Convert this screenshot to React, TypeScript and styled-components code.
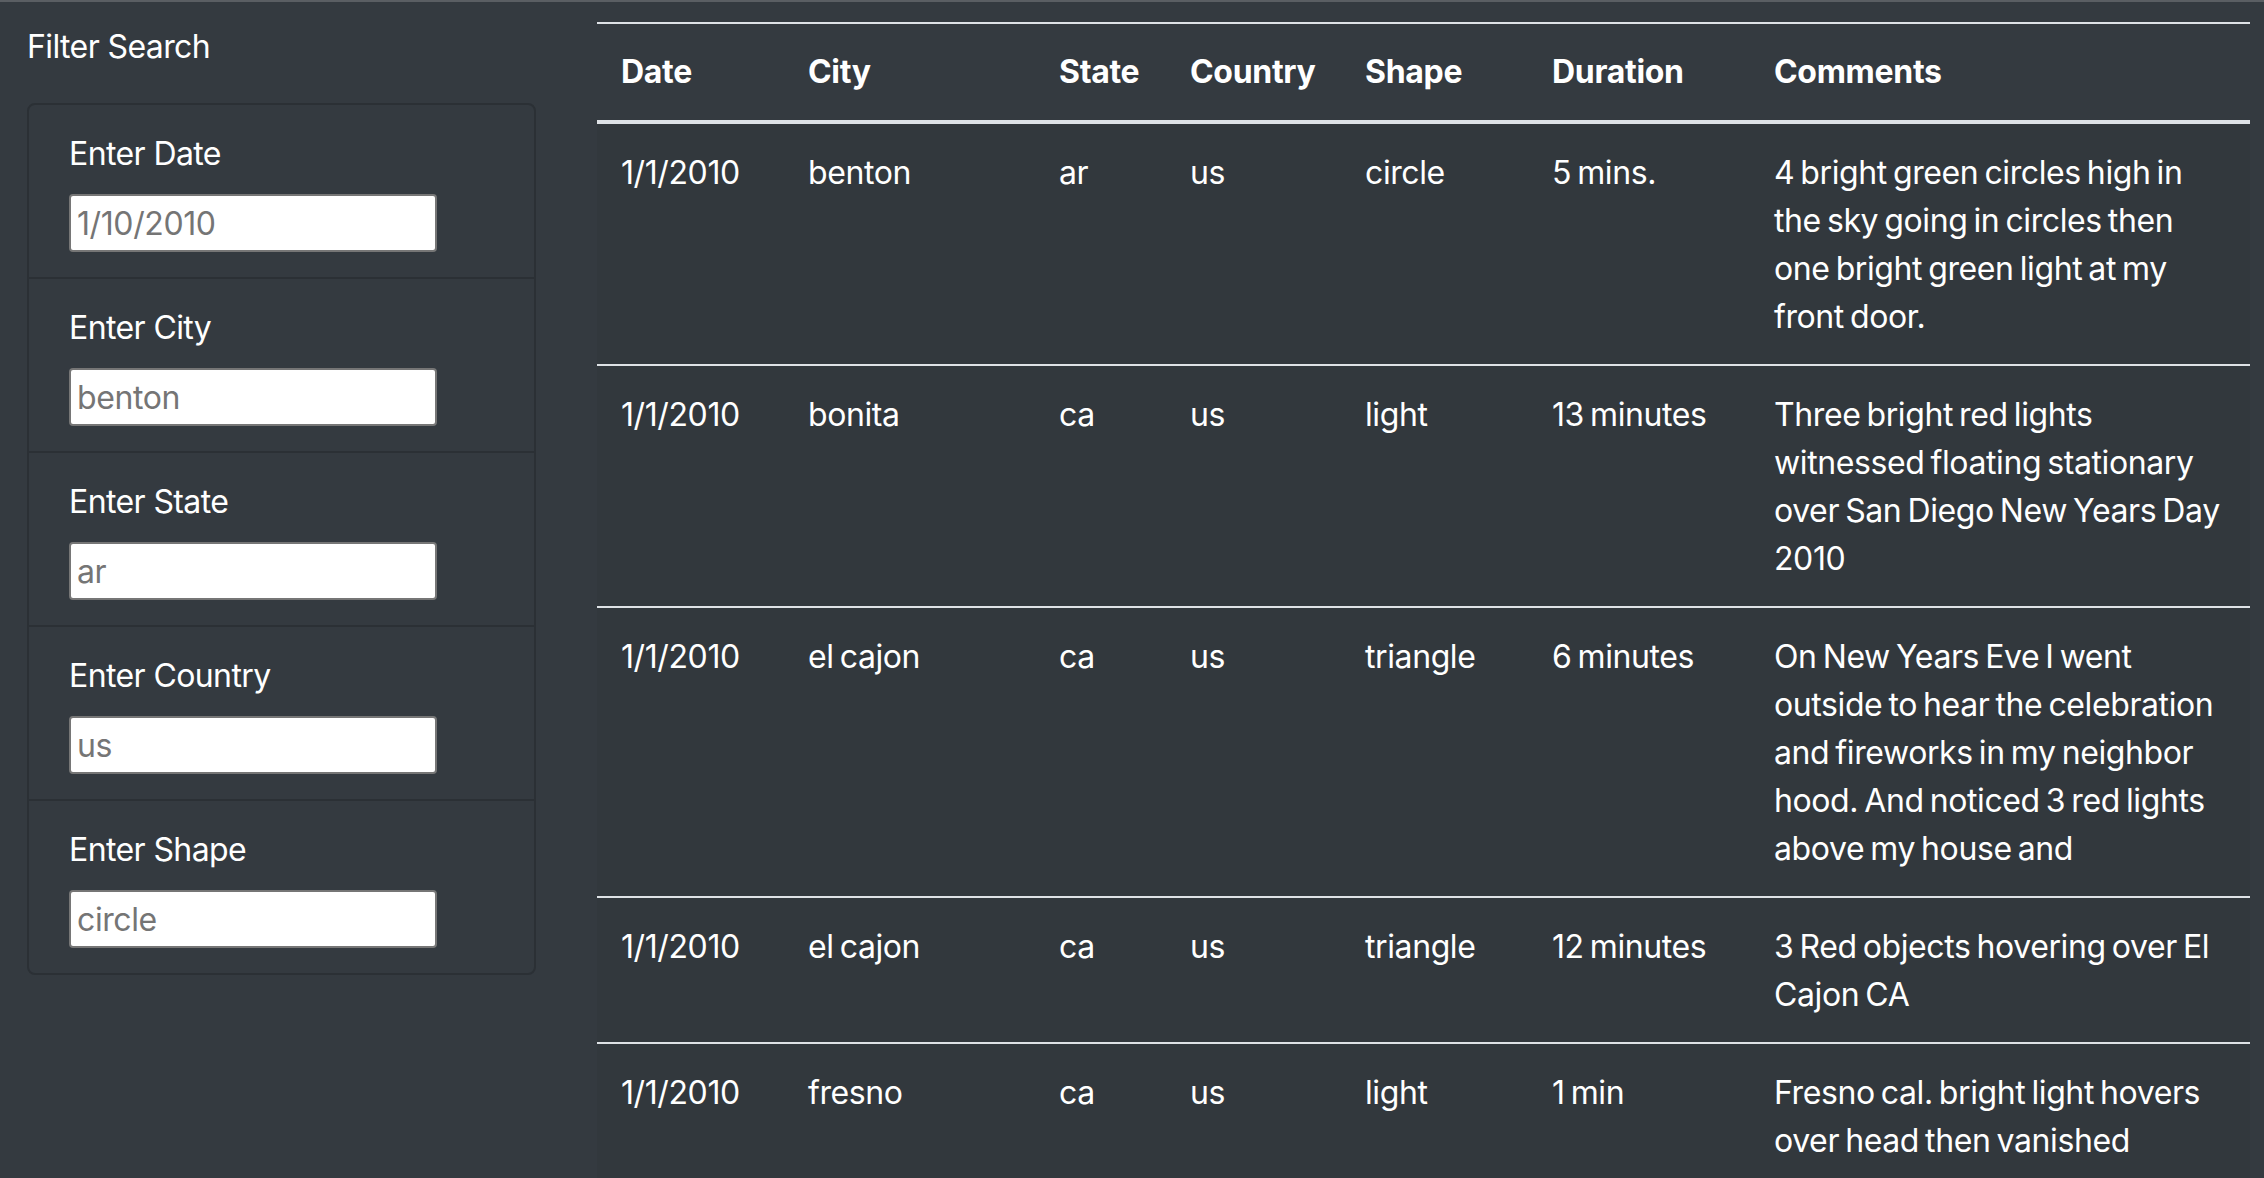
import React from "react";
import styled, { createGlobalStyle } from "styled-components";

const GlobalStyle = createGlobalStyle`
  html, body {
    margin: 0;
    padding: 0;
    background: #343a40;
  }
  body {
    font-family: Inter, "Noto Sans", "Liberation Sans", sans-serif;
    color: #ffffff;
    overflow: hidden;
  }
  * { box-sizing: border-box; }
`;

const Page = styled.div`
  min-height: 1178px;
  background: #343a40;
  border-top: 2px solid #5a5e63;
`;

const Layout = styled.div`
  display: flex;
  align-items: flex-start;
  padding: 0 14px 0 27px;
  gap: 61px;
`;

const Sidebar = styled.aside`
  width: 509px;
  flex: none;
  padding-top: 21px;
`;

const SideTitle = styled.div`
  font-size: 32px;
  line-height: 48px;
  margin-bottom: 32px;
  letter-spacing: -0.6px;
`;

const Card = styled.div`
  border: 2px solid #2b3035;
  border-radius: 8px;
  overflow: hidden;
`;

const Item = styled.div`
  padding: 25px 40px;
  border-bottom: 2px solid #2b3035;
  &:last-child {
    border-bottom: none;
  }
`;

const Label = styled.label`
  display: block;
  font-size: 32px;
  line-height: 48px;
  margin-bottom: 16px;
  letter-spacing: -0.6px;
`;

const Input = styled.input`
  display: block;
  width: 368px;
  height: 58px;
  border: 2px solid #767676;
  border-radius: 4px;
  background: #ffffff;
  padding: 0 6px;
  font-family: inherit;
  font-size: 32px;
  letter-spacing: -0.4px;
  color: #212529;
  outline: none;
  &::placeholder {
    color: #757575;
  }
`;

const Main = styled.main`
  flex: 1;
  padding-top: 20px;
`;

const Table = styled.table`
  width: 100%;
  border-collapse: separate;
  border-spacing: 0;
  table-layout: fixed;
  font-size: 32px;
  line-height: 48px;
`;

const Th = styled.th`
  text-align: left;
  font-weight: 700;
  padding: 24px;
  letter-spacing: -0.3px;
  border-top: 2px solid #dee2e6;
  border-bottom: 4px solid #dee2e6;
  vertical-align: bottom;
  white-space: nowrap;
`;

const Td = styled.td`
  padding: 25px 24px 23px;
  vertical-align: top;
  letter-spacing: -0.4px;
  word-spacing: -2.5px;
  border-bottom: 2px solid #dee2e6;
  background: #32383d;
`;

const columns: { key: string; label: string; width: number }[] = [
  { key: "date", label: "Date", width: 187 },
  { key: "city", label: "City", width: 251 },
  { key: "state", label: "State", width: 131 },
  { key: "country", label: "Country", width: 175 },
  { key: "shape", label: "Shape", width: 187 },
  { key: "duration", label: "Duration", width: 222 },
  { key: "comments", label: "Comments", width: 500 },
];

type Sighting = {
  date: string;
  city: string;
  state: string;
  country: string;
  shape: string;
  duration: string;
  comments: string;
};

const rows: Sighting[] = [
  {
    date: "1/1/2010",
    city: "benton",
    state: "ar",
    country: "us",
    shape: "circle",
    duration: "5 mins.",
    comments:
      "4 bright green circles high in the sky going in circles then one bright green light at my front door.",
  },
  {
    date: "1/1/2010",
    city: "bonita",
    state: "ca",
    country: "us",
    shape: "light",
    duration: "13 minutes",
    comments:
      "Three bright red lights witnessed floating stationary over San Diego New Years Day 2010",
  },
  {
    date: "1/1/2010",
    city: "el cajon",
    state: "ca",
    country: "us",
    shape: "triangle",
    duration: "6 minutes",
    comments:
      "On New Years Eve I went outside to hear the celebration and fireworks in my neighbor hood. And noticed 3 red lights above my house and",
  },
  {
    date: "1/1/2010",
    city: "el cajon",
    state: "ca",
    country: "us",
    shape: "triangle",
    duration: "12 minutes",
    comments: "3 Red objects hovering over El Cajon CA",
  },
  {
    date: "1/1/2010",
    city: "fresno",
    state: "ca",
    country: "us",
    shape: "light",
    duration: "1 min",
    comments: "Fresno cal. bright light hovers over head then vanished",
  },
];

const filters = [
  { id: "datetime", label: "Enter Date", placeholder: "1/10/2010" },
  { id: "city", label: "Enter City", placeholder: "benton" },
  { id: "state", label: "Enter State", placeholder: "ar" },
  { id: "country", label: "Enter Country", placeholder: "us" },
  { id: "shape", label: "Enter Shape", placeholder: "circle" },
];

export default function App() {
  return (
    <Page>
      <GlobalStyle />
      <Layout>
        <Sidebar>
          <SideTitle>Filter Search</SideTitle>
          <Card>
            {filters.map((f) => (
              <Item key={f.id}>
                <Label htmlFor={f.id}>{f.label}</Label>
                <Input id={f.id} type="text" placeholder={f.placeholder} />
              </Item>
            ))}
          </Card>
        </Sidebar>
        <Main>
          <Table>
            <colgroup>
              {columns.map((c) => (
                <col key={c.key} style={{ width: c.width }} />
              ))}
            </colgroup>
            <thead>
              <tr>
                {columns.map((c) => (
                  <Th key={c.key}>{c.label}</Th>
                ))}
              </tr>
            </thead>
            <tbody>
              {rows.map((r, i) => (
                <tr key={i}>
                  <Td>{r.date}</Td>
                  <Td>{r.city}</Td>
                  <Td>{r.state}</Td>
                  <Td>{r.country}</Td>
                  <Td>{r.shape}</Td>
                  <Td>{r.duration}</Td>
                  <Td>{r.comments}</Td>
                </tr>
              ))}
            </tbody>
          </Table>
        </Main>
      </Layout>
    </Page>
  );
}
